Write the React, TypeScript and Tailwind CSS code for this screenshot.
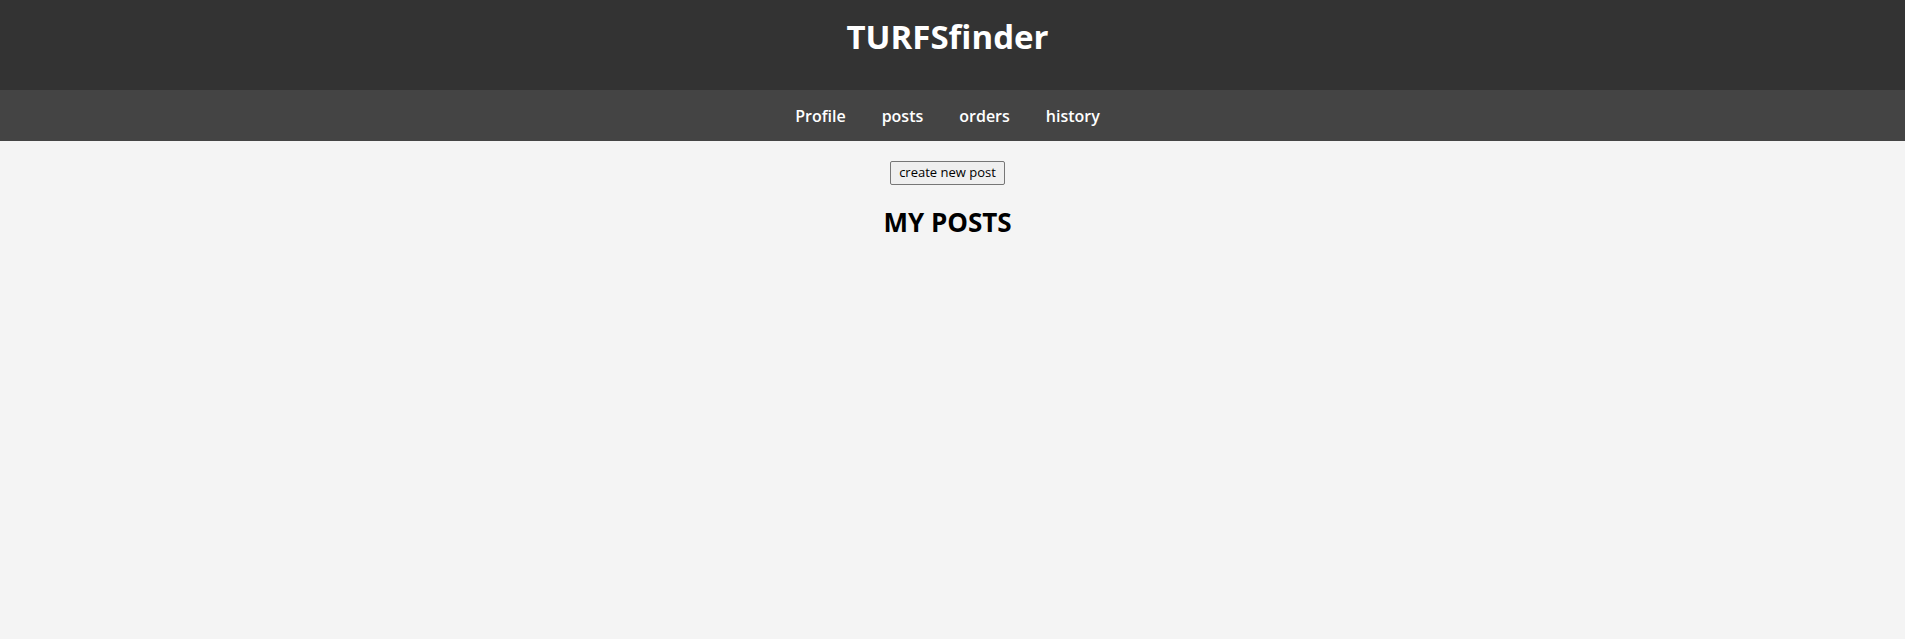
const links = ['Profile', 'posts', 'orders', 'history']

export default function App() {
  return (
    <div className="min-h-[639px] bg-[#f4f4f4] font-['Comic_Sans_MS','Open_Sans',sans-serif]">
      <header className="flex h-[90px] justify-center bg-[#333333] pt-[13px] pr-[10px]">
        <h1 className="text-[33px] leading-[48px] font-bold text-white">TURFSfinder</h1>
      </header>

      <nav className="flex h-[51px] items-center justify-center bg-[#444444] pr-[10px]">
        {links.map((l) => (
          <a key={l} href="#" className="px-[18px] text-[16px] font-semibold text-white">
            {l}
          </a>
        ))}
      </nav>

      <main className="flex flex-col items-center pt-[20px] pr-[10px]">
        <button className="h-[24px] border border-[#767676] rounded-[2px] bg-[#efefef] px-[8px] text-[13px] text-black">
          create new post
        </button>
        <h2 className="mt-[18px] text-[26px] leading-[39px] font-bold text-black">MY POSTS</h2>
      </main>
    </div>
  )
}
